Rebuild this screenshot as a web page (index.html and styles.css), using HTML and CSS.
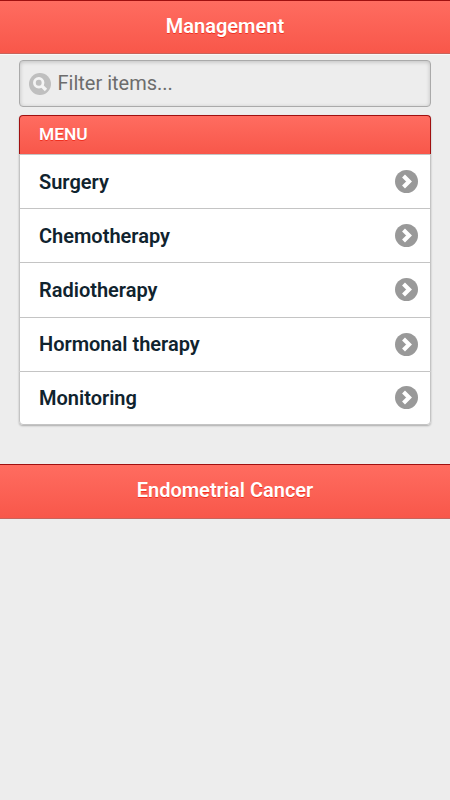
FILE: index.html
```html
<!DOCTYPE html>
<html lang="en">
<head>
	<meta charset="UTF-8">
	<title>Management</title>
	<link rel="stylesheet" href="styles.css">
</head>
<body>
	<svg class="defs" aria-hidden="true">
		<symbol id="arrow" viewBox="0 0 24 24">
			<circle cx="12" cy="12" r="12" fill="#999"/>
			<path d="M8.9 6.2l5.8 5.8-5.8 5.8" fill="none" stroke="#fff" stroke-width="4.3"/>
		</symbol>
	</svg>

	<header class="bar">
		<h1>Management</h1>
	</header>

	<main class="content">
		<form class="filter">
			<svg class="search" viewBox="0 0 24 24">
				<circle cx="12" cy="12" r="12" fill="#bfbfbf"/>
				<circle cx="10.6" cy="10.6" r="4.7" fill="none" stroke="#f4f4f4" stroke-width="3"/>
				<path d="M14 14l4.5 4.5" stroke="#f4f4f4" stroke-width="3.6"/>
			</svg>
			<input type="text" placeholder="Filter items...">
		</form>

		<ul class="list">
			<li class="divider">MENU</li>
			<li><a href="#">Surgery<svg class="icon"><use href="#arrow"/></svg></a></li>
			<li><a href="#">Chemotherapy<svg class="icon"><use href="#arrow"/></svg></a></li>
			<li><a href="#">Radiotherapy<svg class="icon"><use href="#arrow"/></svg></a></li>
			<li><a href="#">Hormonal therapy<svg class="icon"><use href="#arrow"/></svg></a></li>
			<li><a href="#">Monitoring<svg class="icon"><use href="#arrow"/></svg></a></li>
		</ul>
	</main>

	<footer class="bar bar-footer">
		<h1>Endometrial Cancer</h1>
	</footer>
</body>
</html>
```

FILE: styles.css
```css
*{
	box-sizing: border-box;
}
body{
	margin: 0;
	background: #ededed;
	font-family: Roboto, "Liberation Sans", sans-serif;
	font-size: 20px;
}
.defs{
	display: none;
}
.bar{
	height: 54px;
	border-top: 1px solid #a01010;
	border-bottom: 1px solid #c8645c;
	background: linear-gradient(#ff6c60, #f8574a);
	box-shadow: 0 1px 0 #f8f8f8;
	text-align: center;
}
.bar h1{
	margin: 0;
	color: #fff;
	font-size: 20px;
	font-weight: 600;
	line-height: 50px;
	text-shadow: 0 1px 0 #f03020;
}
.bar-footer{
	height: 55px;
	margin-top: 39px;
}
.content{
	padding: 6px 19px 0;
}
.filter{
	display: flex;
	align-items: center;
	height: 47px;
	padding: 0 9px;
	border: 1px solid #aaa;
	border-radius: 4px;
	box-shadow: inset 0 1px 4px rgba(0,0,0,.2);
}
.search{
	width: 22px;
	height: 22px;
}
.filter input{
	flex: 1;
	min-width: 0;
	margin: 0 0 1px 6.5px;
	padding: 0;
	border: 0;
	outline: 0;
	background: none;
	font: inherit;
}
.filter input::placeholder{
	color: #6c6c6c;
}
.list{
	margin: 8px 0 0;
	padding: 0;
	list-style: none;
	border-radius: 4px;
	box-shadow: 0 1px 2px rgba(0,0,0,.28);
}
.list li{
	height: 54.2px;
	border: 1px solid #c4c4c4;
	border-bottom: 0;
	background: #fff;
}
.list .divider{
	height: 39px;
	padding-left: 19px;
	border-color: #a01010;
	border-radius: 4px 4px 0 0;
	background: linear-gradient(#ff6c60, #f8574a);
	color: #fff;
	font-size: 17.4px;
	font-weight: 600;
	line-height: 36px;
	text-shadow: 0 1px 0 #f03020;
}
.list li:last-child{
	border-bottom: 1px solid #c4c4c4;
	border-radius: 0 0 4px 4px;
}
.list a{
	display: flex;
	align-items: center;
	justify-content: space-between;
	height: 100%;
	padding: 0 12px 0 19px;
	color: #10232e;
	font-weight: 600;
	text-decoration: none;
}
.icon{
	width: 23px;
	height: 23px;
}
```
